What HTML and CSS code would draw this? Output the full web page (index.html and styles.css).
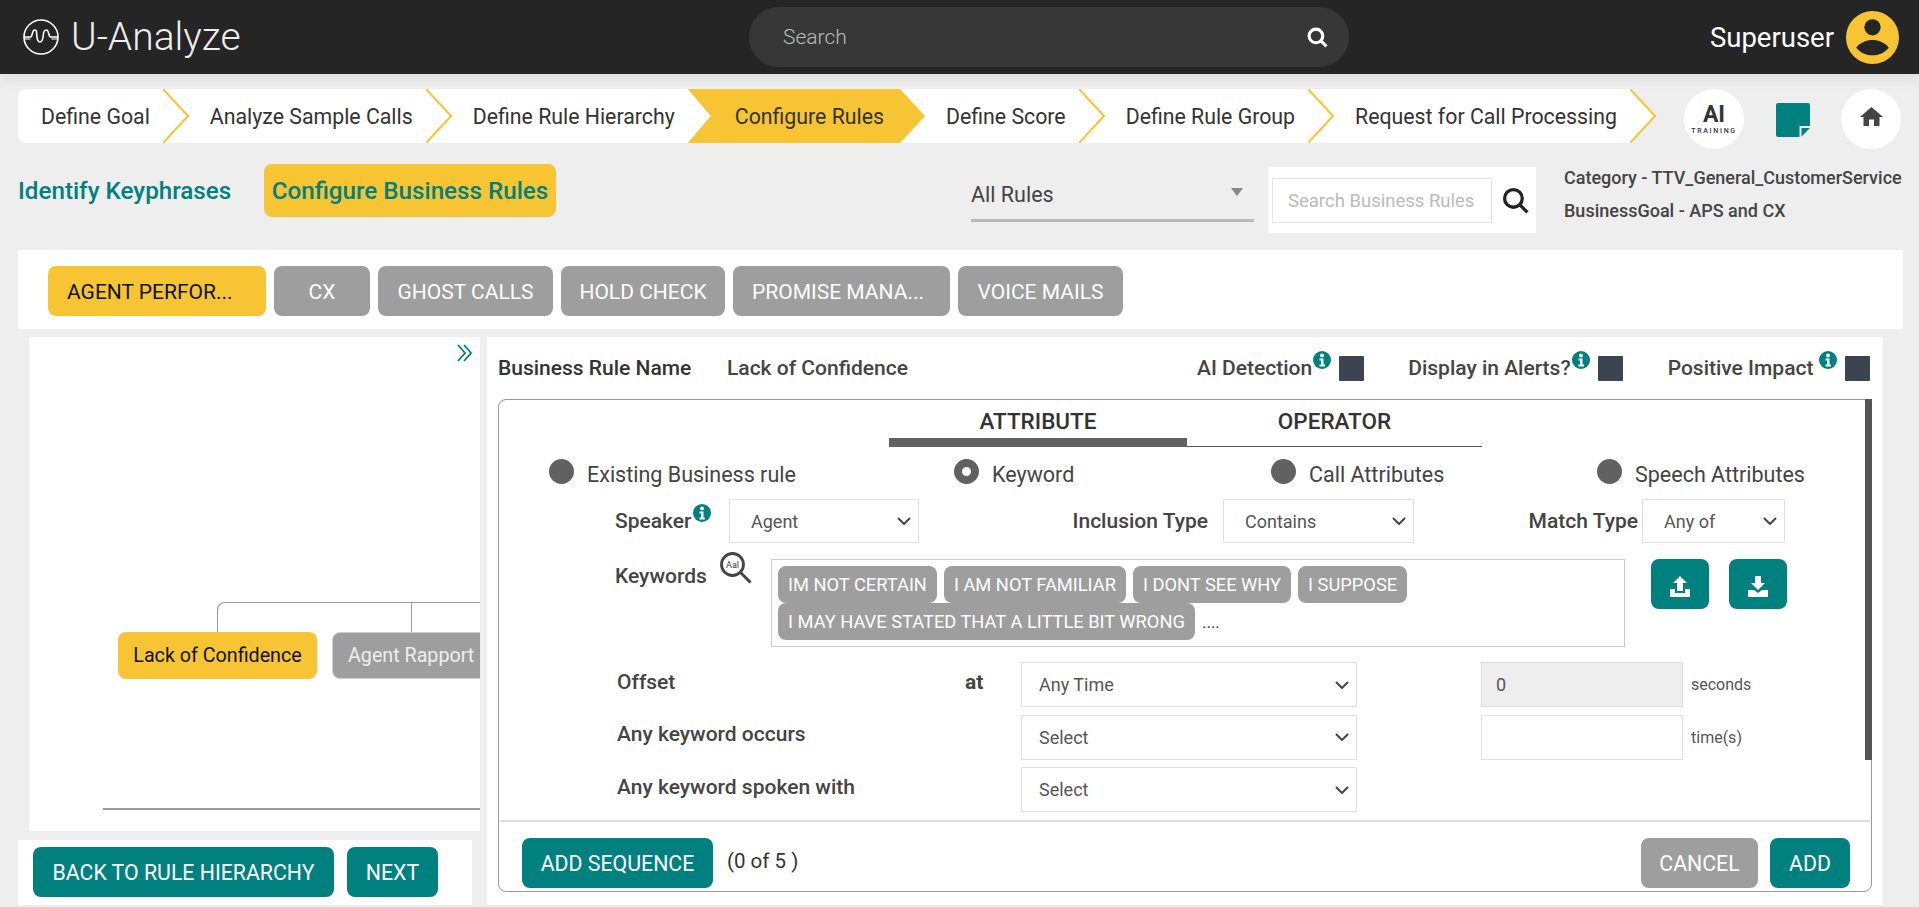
FILE: index.html
```html
<!DOCTYPE html>
<html lang="en">
<head>
  <meta charset="UTF-8">
  <title>U-Analyze</title>
  <link rel="stylesheet" href="styles.css">
</head>
<body>
  <!-- Top bar -->
  <header class="topbar">
    <div class="brand">
      <svg class="brand-logo" viewBox="0 0 36 36" fill="none" stroke="#fff" stroke-width="1.6">
        <circle cx="18" cy="18" r="17"/>
        <path d="M1 18h6.500c2 0 1.600-7 4-7s2 1.500 2.300 5.500c.3 4.500 1 6.500 3.200 6.500s2.800-2 3.200-6.500c.3-4 .8-5.500 3.300-5.500s2 7 4 7H35"/>
        <path d="M1 20h6.500M28.500 20H35" stroke-width="1"/>
      </svg>
      <span class="brand-name">U-Analyze</span>
    </div>
    <div class="search-pill">
      <span>Search</span>
      <svg class="search-pill-icon" viewBox="0 0 20 20" fill="none" stroke="#fff" stroke-width="3">
        <circle cx="8.500" cy="8.500" r="6.500"/>
        <path d="M13 13l5.500 5.500"/>
      </svg>
    </div>
    <div class="user">
      <span>Superuser</span>
      <svg class="avatar" viewBox="0 0 52 52">
        <circle cx="26" cy="26" r="26" fill="#f7c434"/>
        <circle cx="26" cy="16" r="8" fill="#252525"/>
        <path d="M10 36c4-5 10-7.500 16-7.500s12 2.500 16 7.500c-4 5-10 7.500-16 7.500s-12-2.500-16-7.500z" fill="#252525"/>
      </svg>
    </div>
  </header>

  <main class="page">
    <!-- Process steps -->
    <div class="steps-row">
      <nav class="stepper">
        <span class="step step-first">Define Goal</span>
        <svg class="chevron" viewBox="0 0 26 54"><path d="M0 0l25 27L0 54"/></svg>
        <span class="step">Analyze Sample Calls</span>
        <svg class="chevron" viewBox="0 0 26 54"><path d="M0 0l25 27L0 54"/></svg>
        <span class="step">Define Rule Hierarchy</span>
        <span class="step-holder"><span class="step-active">Configure Rules</span></span>
        <span class="step">Define Score</span>
        <svg class="chevron" viewBox="0 0 26 54"><path d="M0 0l25 27L0 54"/></svg>
        <span class="step">Define Rule Group</span>
        <svg class="chevron" viewBox="0 0 26 54"><path d="M0 0l25 27L0 54"/></svg>
        <span class="step">Request for Call Processing</span>
        <svg class="chevron chevron-last" viewBox="0 0 26 54"><path d="M0 0l25 27L0 54"/></svg>
      </nav>
      <div class="round-btn ai-badge">
        <b>AI</b>
        <small>TRAINING</small>
      </div>
      <svg class="note-icon" viewBox="0 0 34 34" fill="#00807e">
        <path d="M2 0h30a2 2 0 0 1 2 2v21H23.500v11H2a2 2 0 0 1-2-2V2a2 2 0 0 1 2-2z"/>
        <path d="M25.500 25H34l-8.500 8.500z"/>
      </svg>
      <div class="round-btn">
        <svg class="home-icon" viewBox="0 0 23 19"><path d="M11.500 0L23 10h-3.500v9H14v-6.500H9V19H3.500v-9H0z" fill="#444"/></svg>
      </div>
    </div>

    <!-- Sub navigation and filters -->
    <div class="filter-row">
      <span class="sub-link sub-link-first">Identify Keyphrases</span>
      <span class="sub-link sub-link-active">Configure Business Rules</span>
      <div class="rule-select">
        <span>All Rules</span>
        <i class="rule-select-arrow"></i>
      </div>
      <div class="rule-search">
        <input type="text" placeholder="Search Business Rules">
        <svg viewBox="0 0 26 26" fill="none" stroke="#222" stroke-width="3.200">
          <circle cx="11" cy="11" r="8.500"/>
          <path d="M17 17l7.500 7.500"/>
        </svg>
      </div>
      <div class="meta">
        <div>Category - TTV_General_CustomerService</div>
        <div>BusinessGoal - APS and CX</div>
      </div>
    </div>

    <!-- Rule groups -->
    <div class="groups">
      <button class="group group-active group-cut w-agent">AGENT PERFOR...</button>
      <button class="group w-cx">CX</button>
      <button class="group w-ghost">GHOST CALLS</button>
      <button class="group w-hold">HOLD CHECK</button>
      <button class="group group-cut w-promise">PROMISE MANA...</button>
      <button class="group w-voice">VOICE MAILS</button>
    </div>

    <div class="work">
      <!-- Left: rule tree -->
      <div class="left-col">
        <div class="tree">
          <svg class="tree-toggle" viewBox="0 0 18 18" fill="none" stroke="#00807e" stroke-width="1.800">
            <path d="M2 1l7 8-7 8M8 1l7 8-7 8"/>
          </svg>
          <div class="tree-line tree-line-top"></div>
          <div class="tree-line tree-line-mid"></div>
          <div class="tree-node tree-node-active">Lack of Confidence</div>
          <div class="tree-node tree-node-grey">Agent Rapport</div>
          <div class="tree-line tree-line-bottom"></div>
        </div>
        <div class="left-actions">
          <button class="btn btn-back">BACK TO RULE HIERARCHY</button>
          <button class="btn btn-next">NEXT</button>
        </div>
      </div>

      <!-- Right: rule editor -->
      <section class="editor">
        <div class="editor-head">
          <span class="rule-label">Business Rule Name</span>
          <span class="rule-name">Lack of Confidence</span>
          <span class="flag flag-ai">AI Detection<svg class="info" viewBox="0 0 18 18"><use href="#info"/></svg><i class="check"></i></span>
          <span class="flag flag-alerts">Display in Alerts?<svg class="info" viewBox="0 0 18 18"><use href="#info"/></svg><i class="check"></i></span>
          <span class="flag flag-impact">Positive Impact<svg class="info info-gap" viewBox="0 0 18 18"><use href="#info"/></svg><i class="check"></i></span>
        </div>

        <div class="card">
          <div class="scroll-thumb"></div>
          <div class="card-body">
            <div class="tabs">
              <div class="tab tab-active">ATTRIBUTE</div>
              <div class="tab">OPERATOR</div>
            </div>

            <div class="radios">
              <label class="radio"><i class="dot"></i><span>Existing Business rule</span></label>
              <label class="radio"><i class="dot dot-on"></i><span>Keyword</span></label>
              <label class="radio"><i class="dot"></i><span>Call Attributes</span></label>
              <label class="radio"><i class="dot"></i><span>Speech Attributes</span></label>
            </div>

            <div class="speaker-row">
              <span class="field-label label-speaker">Speaker<svg class="info" viewBox="0 0 18 18"><use href="#info"/></svg></span>
              <select class="field w-speaker"><option>Agent</option></select>
              <span class="field-label label-inclusion">Inclusion Type</span>
              <select class="field w-inclusion"><option>Contains</option></select>
              <span class="field-label label-match">Match Type</span>
              <select class="field w-match"><option>Any of</option></select>
            </div>

            <div class="keyword-row">
              <span class="field-label label-keywords">Keywords</span>
              <svg class="lens" viewBox="0 0 32 32" fill="none" stroke="#444">
                <circle cx="12.500" cy="12.500" r="11" stroke-width="2.800"/>
                <path d="M20.500 20.500L30.500 30.500" stroke-width="3"/>
                <text x="12.500" y="15.500" text-anchor="middle" font-size="9" fill="#444" stroke="none">Aal</text>
              </svg>
              <div class="keyword-box">
                <span class="chip">IM NOT CERTAIN</span>
                <span class="chip">I AM NOT FAMILIAR</span>
                <span class="chip">I DONT SEE WHY</span>
                <span class="chip">I SUPPOSE</span>
                <span class="chip">I MAY HAVE STATED THAT A LITTLE BIT WRONG</span>
                <span class="more">....</span>
              </div>
              <button class="icon-btn">
                <svg viewBox="0 0 22 22" fill="#fff"><path d="M11 0l7 7h-4v8H8V7H4z"/><path d="M1 13h5v4h10v-4h5v8H1z"/></svg>
              </button>
              <button class="icon-btn">
                <svg viewBox="0 0 22 22" fill="#fff"><path d="M8 0h6v7h4l-7 7-7-7h4z"/><path d="M1 14h6l4 3 4-3h6v7H1z"/></svg>
              </button>
            </div>

            <div class="offset-grid">
              <span class="field-label">Offset</span>
              <span class="field-label field-at">at</span>
              <select class="field field-wide"><option>Any Time</option></select>
              <input class="field field-input field-disabled" type="text" value="0" disabled>
              <span class="unit">seconds</span>

              <span class="field-label row-start">Any keyword occurs</span>
              <select class="field field-wide"><option>Select</option></select>
              <input class="field field-input" type="text">
              <span class="unit">time(s)</span>

              <span class="field-label row-start">Any keyword spoken with</span>
              <select class="field field-wide"><option>Select</option></select>
            </div>
          </div>

          <div class="card-foot">
            <button class="btn btn-seq">ADD SEQUENCE</button>
            <span class="count">(0 of 5 )</span>
            <button class="btn btn-cancel">CANCEL</button>
            <button class="btn btn-add">ADD</button>
          </div>
        </div>
      </section>
    </div>
  </main>

  <!-- Shared info glyph -->
  <svg class="defs" width="0" height="0">
    <symbol id="info" viewBox="0 0 18 18">
      <circle cx="9" cy="9" r="9" fill="#00807e"/>
      <circle cx="9" cy="4.500" r="1.900" fill="#fff"/>
      <path d="M6.500 7.500h4v6h1.500v2H6.500v-2H8v-4H6.500z" fill="#fff"/>
    </symbol>
  </svg>
</body>
</html>
```

FILE: styles.css
```css
/* General styling */
* {
  box-sizing: border-box;
}

body {
  margin: 0;
  width: 1919px;
  height: 907px;
  overflow: hidden;
  background-color: #eee;
  font-family: Roboto, "Noto Sans", sans-serif;
  color: #333;
}

button {
  font-family: inherit;
  border: none;
  cursor: pointer;
}

.defs {
  display: block;
}

/* Top bar */
.topbar {
  height: 74px;
  background-color: #252525;
  display: flex;
  align-items: center;
  color: #fff;
  position: relative;
  box-shadow: 0 4px 14px rgba(0, 0, 0, 0.08);
}

.brand {
  display: flex;
  align-items: center;
  width: 749px;
  padding-left: 23px;
  gap: 12px;
}

.brand-logo {
  width: 36px;
  height: 36px;
}

.brand-name {
  font-size: 39px;
  font-weight: 300;
  color: #eee;
}

.search-pill {
  width: 600px;
  height: 60px;
  border-radius: 30px;
  background-color: #373737;
  color: #bbb;
  font-size: 21px;
  font-weight: 300;
  display: flex;
  align-items: center;
  justify-content: space-between;
  padding: 0 21px 0 34px;
}

.search-pill-icon {
  width: 21px;
  height: 21px;
}

.user {
  margin-left: auto;
  padding-right: 20px;
  display: flex;
  align-items: center;
  gap: 12px;
  font-size: 27.5px;
}

.avatar {
  width: 53px;
  height: 53px;
}

/* Process steps */
.page {
  padding-top: 15px;
}

.steps-row {
  display: flex;
  align-items: flex-start;
  height: 60px;
  padding-left: 18px;
}

.stepper {
  display: flex;
  height: 54px;
  width: 1640px;
  font-size: 21.3px;
  flex: none;
}

.step {
  background-color: #fff;
  display: flex;
  align-items: center;
  white-space: nowrap;
  padding: 0 13px 0 21px;
}

.step-first {
  border-radius: 8px 0 0 8px;
  padding-left: 23px;
}

.chevron {
  width: 26px;
  height: 54px;
  flex: none;
  background-color: #fff;
  fill: none;
  stroke: #f7c434;
  stroke-width: 2;
}

.chevron-last {
  background-color: transparent;
  fill: #fff;
}

.step-holder {
  background-color: #fff;
  display: flex;
}

.step-active {
  background-color: #f7c434;
  display: flex;
  align-items: center;
  padding: 0 41px 0 47px;
  white-space: nowrap;
  clip-path: polygon(0 0, calc(100% - 25px) 0, 100% 50%, calc(100% - 25px) 100%, 0 100%, 23px 50%);
}

.round-btn {
  width: 60px;
  height: 60px;
  border-radius: 50%;
  background-color: #fff;
  display: flex;
  flex-direction: column;
  align-items: center;
  justify-content: center;
  flex: none;
}

.ai-badge {
  margin-left: 26px;
  color: #333;
}

.ai-badge b {
  font-size: 23px;
  line-height: 23px;
}

.ai-badge small {
  font-size: 7px;
  letter-spacing: 1.7px;
  font-weight: 500;
  line-height: 10px;
}

.note-icon {
  width: 34px;
  height: 34px;
  margin: 14px 31px 0 32px;
  flex: none;
}

.home-icon {
  width: 23px;
  height: 19px;
  margin-top: -6px;
}

/* Sub navigation and filters */
.filter-row {
  display: flex;
  align-items: flex-start;
  height: 69px;
  margin-top: 15px;
  padding-left: 18px;
}

.sub-link {
  font-size: 24.2px;
  font-weight: 500;
  color: #00807e;
  height: 53px;
  display: flex;
  align-items: center;
  white-space: nowrap;
  flex: none;
}

.sub-link-first {
  width: 214px;
}

.sub-link-active {
  margin-left: 32px;
  width: 292px;
  justify-content: center;
  background-color: #f7c434;
  border-radius: 8px;
}

.rule-select {
  width: 283px;
  height: 58px;
  margin-left: 415px;
  border-bottom: 3px solid #bbb;
  display: flex;
  align-items: center;
  justify-content: space-between;
  padding: 6px 11px 0 0;
  font-size: 21.5px;
  color: #444;
  flex: none;
}

.rule-select-arrow {
  width: 0;
  height: 0;
  border-left: 6px solid transparent;
  border-right: 6px solid transparent;
  border-top: 8px solid #888;
  margin-top: -6px;
}

.rule-search {
  width: 268px;
  height: 66px;
  margin: 3px 0 0 14px;
  background-color: #fff;
  display: flex;
  align-items: center;
  padding-left: 4px;
  gap: 10px;
  flex: none;
}

.rule-search input {
  width: 220px;
  height: 45px;
  border: 1px solid #e4e4e4;
  padding: 2px 15px 0;
  font-family: inherit;
  font-size: 18.5px;
  outline: none;
}

.rule-search input::placeholder {
  color: #bbb;
}

.rule-search svg {
  width: 27px;
  height: 27px;
}

.meta {
  margin: -3px 0 0 28px;
  font-size: 18px;
  font-weight: 500;
  color: #444;
  line-height: 33px;
  white-space: nowrap;
}

/* Rule groups */
.groups {
  margin: 17px 0 0 18px;
  width: 1885px;
  height: 79px;
  background-color: #fff;
  padding: 16px 30px;
  display: flex;
  gap: 8px;
}

.group {
  height: 50px;
  border-radius: 8px;
  background-color: #9e9e9e;
  color: #fff;
  font-size: 21px;
  padding: 1px 0 0;
  white-space: nowrap;
}

.group-active {
  background-color: #f7c434;
  color: #111;
}

.group-cut {
  text-align: left;
  padding-left: 19px;
}

.w-agent { width: 218px; }
.w-cx { width: 96px; }
.w-ghost { width: 175px; }
.w-hold { width: 164px; }
.w-promise { width: 217px; }
.w-voice { width: 165px; }

/* Work area */
.work {
  display: flex;
  gap: 7px;
  margin-top: 8px;
  padding-left: 18px;
}

.left-col {
  width: 462px;
  flex: none;
}

.tree {
  position: relative;
  margin-left: 11px;
  width: 451px;
  height: 494px;
  background-color: #fff;
  overflow: hidden;
}

.tree-toggle {
  position: absolute;
  left: 427px;
  top: 7px;
  width: 18px;
  height: 18px;
}

.tree-line {
  position: absolute;
  border: 0 solid #999;
}

.tree-line-top {
  left: 188px;
  top: 265px;
  width: 300px;
  height: 30px;
  border-width: 1px 0 0 1px;
  border-top-left-radius: 8px;
}

.tree-line-mid {
  left: 382px;
  top: 265px;
  height: 30px;
  border-left-width: 1px;
}

.tree-line-bottom {
  left: 74px;
  top: 471px;
  width: 380px;
  border-top-width: 2px;
}

.tree-node {
  position: absolute;
  top: 295px;
  height: 47px;
  border-radius: 8px;
  display: flex;
  align-items: center;
  font-size: 19.7px;
  white-space: nowrap;
}

.tree-node-active {
  left: 89px;
  width: 199px;
  justify-content: center;
  background-color: #f7c434;
  color: #111;
}

.tree-node-grey {
  left: 303px;
  width: 199px;
  padding-left: 15px;
  background-color: #9e9e9e;
  color: #eee;
  border: 1px solid #ccc;
}

.left-actions {
  margin-top: 9px;
  width: 454px;
  height: 65px;
  background-color: #fff;
  padding: 7px 15px;
  display: flex;
  gap: 13px;
}

.btn {
  height: 50px;
  border-radius: 8px;
  background-color: #00807e;
  color: #fff;
  font-size: 21.3px;
  padding: 0;
  white-space: nowrap;
  flex: none;
}

.btn-back { width: 301px; }
.btn-next { width: 91px; }

/* Rule editor */
.editor {
  width: 1396px;
  height: 568px;
  background-color: #fff;
  padding: 0 11px;
  flex: none;
}

.editor-head {
  height: 62px;
  display: flex;
  align-items: center;
  font-size: 21px;
  font-weight: 500;
  color: #444;
}

.rule-label {
  width: 229px;
  color: #333;
  flex: none;
}

.rule-name {
  flex: none;
  width: 470px;
}

.flag {
  display: flex;
  align-items: center;
  flex: none;
  white-space: nowrap;
}

.flag-alerts { margin-left: 44px; }
.flag-impact { margin-left: 45px; }

.info {
  width: 18px;
  height: 18px;
  flex: none;
  margin: -16px 0 0 1px;
}

.flag .info-gap {
  margin-left: 6px;
}

.check {
  width: 25px;
  height: 25px;
  background-color: #3d4451;
  border-radius: 1px;
  margin-left: 8px;
  flex: none;
}

.card {
  position: relative;
  width: 1374px;
  height: 493px;
  border: 1px solid #999;
  border-radius: 8px;
  padding: 1px;
  display: flex;
  flex-direction: column;
}

.scroll-thumb {
  position: absolute;
  right: -1px;
  top: -1px;
  width: 7px;
  height: 361px;
  background-color: #555;
}

.card-body {
  height: 421px;
  border-bottom: 2px solid #ddd;
  flex: none;
}

.tabs {
  display: flex;
  margin-left: 389px;
  height: 46px;
}

.tab {
  width: 295px;
  height: 46px;
  text-align: center;
  font-size: 22.5px;
  font-weight: 500;
  padding-top: 7px;
  color: #333;
  border-bottom: 1px solid #555;
}

.tab-active {
  width: 298px;
  border-bottom: 9px solid #616161;
}

.radios {
  display: grid;
  grid-template-columns: 405px 317px 326px 1fr;
  padding-left: 49px;
  margin-top: 12px;
}

.radio {
  display: flex;
  align-items: center;
  gap: 13px;
  font-size: 21.5px;
  height: 25px;
  color: #444;
}

.radio span {
  padding-top: 5px;
}

.dot {
  width: 25px;
  height: 25px;
  border-radius: 50%;
  background-color: #616161;
  flex: none;
}

.dot-on {
  background-color: #fff;
  border: 8px solid #616161;
}

.speaker-row {
  display: flex;
  align-items: center;
  margin-top: 15px;
  padding-left: 115px;
}

.field-label {
  font-size: 21px;
  font-weight: 500;
  color: #444;
  white-space: nowrap;
}

.label-speaker {
  width: 114px;
  display: flex;
  align-items: center;
}

.label-inclusion {
  width: 304px;
  text-align: right;
  padding-right: 15px;
}

.label-match {
  width: 228px;
  text-align: right;
  padding-right: 4px;
}

.field {
  height: 45px;
  width: 100%;
  appearance: none;
  border: 1px solid #e2e2e2;
  background: #fff url("data:image/svg+xml,%3Csvg xmlns='http://www.w3.org/2000/svg' width='14' height='8' viewBox='0 0 14 8'%3E%3Cpath d='M1 1l6 6 6-6' fill='none' stroke='%23444' stroke-width='2'/%3E%3C/svg%3E") no-repeat right 7px center;
  padding: 0 0 0 18px;
  font-family: inherit;
  font-size: 18px;
  color: #555;
  outline: none;
}

.speaker-row .field {
  height: 44px;
  padding-left: 21px;
}

.w-speaker { width: 190px; flex: none; }
.w-inclusion { width: 191px; flex: none; }
.w-match { width: 143px; flex: none; }

.field-disabled {
  background-image: none;
  background-color: #eee;
  border-color: #ddd;
}

.keyword-row {
  display: flex;
  align-items: flex-start;
  margin-top: 16px;
  padding-left: 115px;
}

.label-keywords {
  width: 105px;
  padding-top: 5px;
}

.lens {
  width: 32px;
  height: 32px;
  margin-top: -7px;
  flex: none;
}

.keyword-box {
  width: 854px;
  height: 88px;
  margin-left: 19px;
  border: 1px solid #ccc;
  padding: 6px;
  display: flex;
  flex-wrap: wrap;
  align-content: flex-start;
  align-items: center;
  gap: 0 7px;
}

.chip {
  height: 37px;
  border-radius: 8px;
  background-color: #9e9e9e;
  color: #fff;
  font-size: 18.3px;
  padding: 0 10px;
  display: flex;
  align-items: center;
  white-space: nowrap;
}

.more {
  margin-left: 0;
  font-size: 17px;
}

.icon-btn {
  width: 58px;
  height: 50px;
  margin-left: 26px;
  border-radius: 8px;
  background-color: #00807e;
  padding: 0;
  display: flex;
  align-items: center;
  justify-content: center;
  flex: none;
}

.icon-btn + .icon-btn {
  margin-left: 20px;
}

.icon-btn svg {
  width: 22px;
  height: 22px;
  margin-top: 6px;
}

.offset-grid {
  display: grid;
  grid-template-columns: 348px 56px 336px 124px 202px 1fr;
  row-gap: 7.5px;
  align-items: center;
  margin-top: 15px;
  padding-left: 117px;
}

.offset-grid > .field-label {
  padding-bottom: 6px;
}

.row-start {
  grid-column: 1;
}

.field-wide {
  grid-column: 3;
  padding-left: 17px;
}

.field-input {
  grid-column: 5;
  padding-left: 14px;
  background-image: none;
}

.field-at {
  font-weight: 700;
}

.unit {
  font-size: 16px;
  color: #555;
  margin-left: 8px;
}

.card-foot {
  flex: 1;
  display: flex;
  align-items: flex-start;
  padding: 16px 20px 0 22px;
}

.count {
  margin: 11px 0 0 14px;
  font-size: 20.5px;
}

.btn-seq { width: 191px; }
.btn-cancel { width: 117px; margin-left: auto; background-color: #9e9e9e; }
.btn-add { width: 80px; margin-left: 12px; }
```
